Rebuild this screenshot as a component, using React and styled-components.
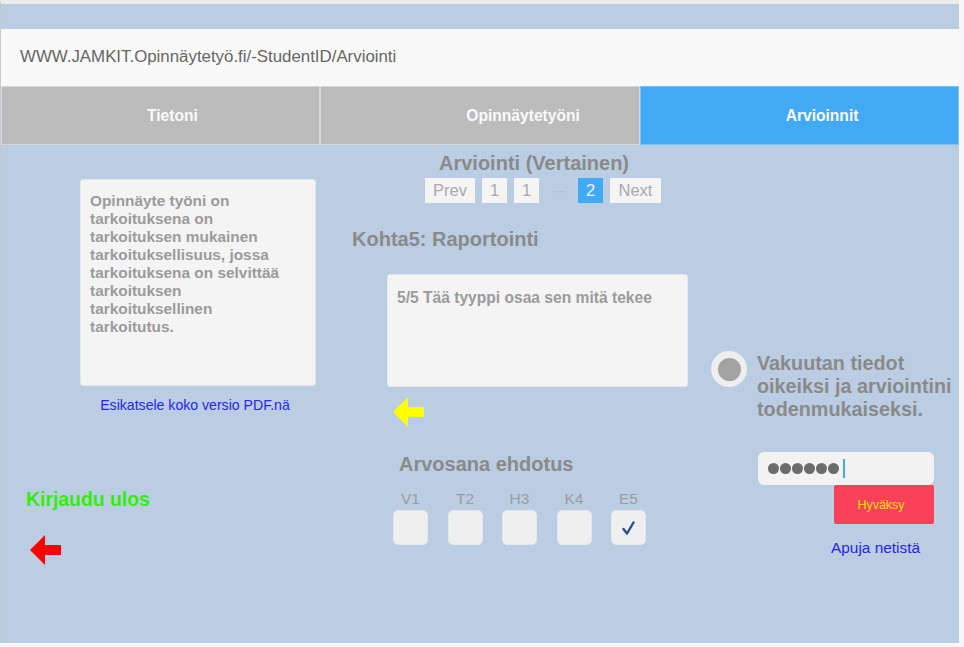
import React from 'react';
import styled, { createGlobalStyle } from 'styled-components';

const Global = createGlobalStyle`
  html, body { margin: 0; padding: 0; background: #f7f7f9; }
  body { font-family: "Liberation Sans", Arial, sans-serif; }
  * { box-sizing: border-box; }
`;

const Frame = styled.div`
  width: 959px;
  height: 643px;
  border-top: 4px solid #ececec;
  border-left: 1px solid #c9c9c9;
  background: #bbcde3;
  padding-top: 25px;
  display: flex;
  flex-direction: column;
`;

const AddressBar = styled.div`
  height: 57px;
  background: #f9f9f9;
  padding-left: 19px;
  padding-bottom: 2px;
  display: flex;
  align-items: center;
  font-size: 16.85px;
  color: #666;
`;

const TabBar = styled.div`
  height: 59px;
  display: flex;
`;

const Tab = styled.div`
  flex: 1;
  border: 1px solid ${p => (p.$active ? '#7cc0f5' : '#d6d8dc')};
  background: ${p => (p.$active ? '#42a9f5' : '#bcbcbc')};
  color: #fafafa;
  font-weight: bold;
  font-size: 15.6px;
  padding-left: 145px;
  display: flex;
  align-items: center;
`;

const Content = styled.div`
  flex: 1;
  display: grid;
  grid-template-columns: 340px 370px 1fr;
`;

const Column = styled.div`
  display: flex;
  flex-direction: column;
  align-items: flex-start;
  padding-top: ${p => p.$top}px;
`;

const Box = styled.div`
  margin-left: ${p => p.$left}px;
  margin-top: ${p => p.$mt || 0}px;
  width: ${p => p.$w}px;
  height: ${p => p.$h}px;
  background: #f4f4f4;
  border: 1px solid #e2e6ec;
  border-radius: 3px;
  padding: ${p => p.$pt}px 6px 0 9px;
  color: #9b9b9b;
  font-weight: bold;
  font-size: ${p => p.$fs}px;
  line-height: ${p => p.$lh}px;
  white-space: nowrap;
`;

const Link = styled.a`
  display: block;
  margin-left: ${p => p.$left}px;
  margin-top: ${p => p.$mt}px;
  width: ${p => (p.$w ? `${p.$w}px` : 'auto')};
  text-align: center;
  font-size: ${p => p.$fs}px;
  line-height: 16px;
  color: #2525ef;
  text-decoration: none;
  white-space: nowrap;
`;

const Heading = styled.div`
  margin-left: ${p => p.$left}px;
  margin-top: ${p => p.$mt || 0}px;
  font-size: ${p => p.$fs || 20}px;
  line-height: 22px;
  font-weight: bold;
  color: ${p => p.$color || '#8a8a8a'};
  white-space: nowrap;
`;

const ArrowWrap = styled.div`
  margin-left: ${p => p.$left}px;
  margin-top: ${p => p.$mt}px;
  width: 31px;
  height: 30px;
  display: flex;
`;

const Pager = styled.div`
  margin-left: 84px;
  margin-top: 4px;
  display: flex;
  gap: 7px;
`;

const PageBtn = styled.div`
  width: ${p => p.$w}px;
  height: 25px;
  background: ${p => (p.$active ? '#42a9f5' : '#f4f4f4')};
  color: ${p => (p.$active ? '#eaf5ff' : '#a9a9a9')};
  font-size: 16.5px;
  display: flex;
  align-items: center;
  justify-content: center;
`;

const Ellipsis = styled.div`
  width: 25px;
  height: 25px;
  color: #a3abb8;
  font-size: 11px;
  display: flex;
  align-items: center;
  justify-content: center;
`;

const Grades = styled.div`
  margin-left: 52px;
  margin-top: 15px;
  display: grid;
  grid-template-columns: repeat(5, 35px);
  column-gap: 19.5px;
`;

const Grade = styled.div`
  display: flex;
  flex-direction: column;
  align-items: center;
`;

const GradeLabel = styled.div`
  font-size: 15.5px;
  line-height: 18px;
  color: #9c9c9c;
`;

const CheckBox = styled.div`
  margin-top: 2px;
  width: 35px;
  height: 35px;
  background: #efefef;
  border: 1px solid #e3e7ed;
  border-radius: 5px;
  display: flex;
  align-items: center;
  justify-content: center;
`;

const RadioRow = styled.div`
  display: flex;
  align-items: flex-start;
  gap: 10px;
`;

const RadioOuter = styled.div`
  width: 36px;
  height: 36px;
  border-radius: 50%;
  background: #eeeeee;
  display: flex;
  align-items: center;
  justify-content: center;
  flex-shrink: 0;
`;

const RadioInner = styled.div`
  width: 23px;
  height: 23px;
  border-radius: 50%;
  background: #a3a3a3;
`;

const RadioText = styled.div`
  margin-top: 1px;
  font-size: 19.8px;
  line-height: 23px;
  font-weight: bold;
  color: #8a8a8a;
  white-space: nowrap;
`;

const Password = styled.div`
  margin-left: 47px;
  margin-top: 31px;
  width: 176px;
  height: 33px;
  background: #f2f2f2;
  border-radius: 6px;
  padding-left: 10px;
  display: flex;
  align-items: center;
  gap: 1px;
`;

const Dot = styled.span`
  width: 11px;
  height: 11px;
  border-radius: 50%;
  background: #6b6b6b;
`;

const Caret = styled.span`
  margin-left: 3px;
  width: 2px;
  height: 19px;
  background: #42a9f5;
`;

const AcceptBtn = styled.div`
  margin-left: 123px;
  width: 100px;
  height: 39px;
  background: #f84059;
  border-radius: 2px;
  color: #f5e400;
  font-size: 12.5px;
  display: flex;
  align-items: center;
  justify-content: center;
  padding-right: 6px;
`;

const Arrow = ({ color }) => (
  <svg width="31" height="30" viewBox="0 0 31 30">
    <polygon points="0,15 15,0 15,10 31,10 31,20 15,20 15,30" fill={color} />
  </svg>
);

const Check = () => (
  <svg width="13" height="14" viewBox="0 0 13 14">
    <path d="M1.5 8 L5 12.5 L11.5 1.5" fill="none" stroke="#2e4c86" strokeWidth="2.4" strokeLinecap="round" strokeLinejoin="round" />
  </svg>
);

export default function App() {
  const grades = ['V1', 'T2', 'H3', 'K4', 'E5'];
  return (
    <>
      <Global />
      <Frame>
        <AddressBar>WWW.JAMKIT.Opinnäytetyö.fi/-StudentID/Arviointi</AddressBar>
        <TabBar>
          <Tab>Tietoni</Tab>
          <Tab>Opinnäytetyöni</Tab>
          <Tab $active>Arvioinnit</Tab>
        </TabBar>
        <Content>
          <Column $top={34}>
            <Box $left={79} $w={236} $h={207} $pt={12} $fs={15.4} $lh={18}>
              Opinnäyte työni on<br />
              tarkoituksena on<br />
              tarkoituksen mukainen<br />
              tarkoituksellisuus, jossa<br />
              tarkoituksena on selvittää<br />
              tarkoituksen<br />
              tarkoituksellinen<br />
              tarkoitutus.
            </Box>
            <Link $left={76} $w={236} $mt={11} $fs={14.1}>Esikatsele koko versio PDF.nä</Link>
            <Heading $left={25} $mt={75} $fs={19.4} $color="#33ee00">Kirjaudu ulos</Heading>
            <ArrowWrap $left={29} $mt={25}><Arrow color="#ff0000" /></ArrowWrap>
          </Column>
          <Column $top={7}>
            <Heading $left={98}>Arviointi (Vertainen)</Heading>
            <Pager>
              <PageBtn $w={50}>Prev</PageBtn>
              <PageBtn $w={25}>1</PageBtn>
              <PageBtn $w={25}>1</PageBtn>
              <Ellipsis>···</Ellipsis>
              <PageBtn $w={25} $active>2</PageBtn>
              <PageBtn $w={51}>Next</PageBtn>
            </Pager>
            <Heading $left={11} $mt={25}>Kohta5: Raportointi</Heading>
            <Box $left={46} $mt={24} $w={301} $h={113} $pt={14} $fs={15.6} $lh={17}>
              5/5 Tää tyyppi osaa sen mitä tekee
            </Box>
            <ArrowWrap $left={52} $mt={10}><Arrow color="#ffff00" /></ArrowWrap>
            <Heading $left={58} $mt={26}>Arvosana ehdotus</Heading>
            <Grades>
              {grades.map(g => (
                <Grade key={g}>
                  <GradeLabel>{g}</GradeLabel>
                  <CheckBox>{g === 'E5' && <Check />}</CheckBox>
                </Grade>
              ))}
            </Grades>
          </Column>
          <Column $top={206}>
            <RadioRow>
              <RadioOuter><RadioInner /></RadioOuter>
              <RadioText>
                Vakuutan tiedot<br />
                oikeiksi ja arviointini<br />
                todenmukaiseksi.
              </RadioText>
            </RadioRow>
            <Password>
              {[0, 1, 2, 3, 4, 5].map(i => <Dot key={i} />)}
              <Caret />
            </Password>
            <AcceptBtn>Hyväksy</AcceptBtn>
            <Link $left={120} $mt={16} $fs={15.4}>Apuja netistä</Link>
          </Column>
        </Content>
      </Frame>
    </>
  );
}
